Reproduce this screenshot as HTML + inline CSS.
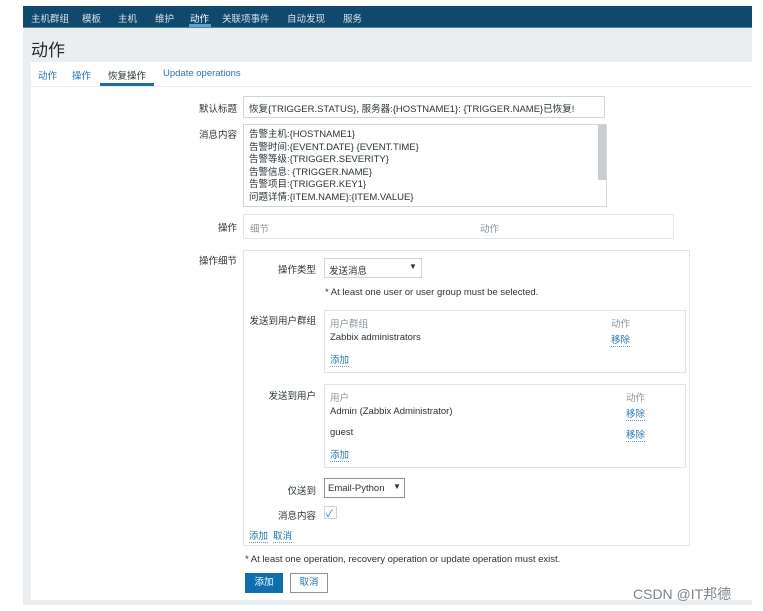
<!DOCTYPE html>
<html><head><meta charset="utf-8"><style>
*{margin:0;padding:0;box-sizing:border-box}
body{width:763px;height:611px;background:#fff;position:relative;overflow:hidden;font-family:"Liberation Sans","Noto Sans CJK SC",sans-serif;font-size:9.5px;color:#2a3338}
div,span{position:absolute;white-space:nowrap}
.nav{left:23px;top:6px;width:729px;height:22px;background:#0f4a6d;border-bottom:1px solid #4f87ad}
.nav span{color:#d6e2ea;top:5px;font-size:9.5px}
.gray{left:23px;top:28px;width:729px;height:577px;background:#ebeef0}
.white{left:31px;top:62px;width:721px;height:538px;background:#fff}
.lbl{text-align:right;width:100px}
.box{border:1px solid #e2e5e7;background:#fff}
.inp{border:1px solid #cfd4d7;background:#fff}
a,.lnk{color:#2775b0;border-bottom:1px dotted #6a9cc4}
.hd{color:#8a959c}
</style></head><body>
<div class="nav">
<span style="left:8px">主机群组</span><span style="left:59px">模板</span><span style="left:95px">主机</span><span style="left:132px">维护</span><span style="left:167px;color:#fff">动作</span><span style="left:199px">关联项事件</span><span style="left:264px">自动发现</span><span style="left:320px">服务</span>
<div style="left:166px;top:18px;width:22px;height:3px;background:#5fa0cf"></div>
</div>
<div class="gray"></div>
<div style="left:31px;top:36px;font-size:17px;color:#1f2a30">动作</div>
<div class="white"></div>
<div style="left:31px;top:86px;width:721px;height:1px;background:#e8ebed"></div>
<span style="left:38px;top:68px;color:#2775b0">动作</span>
<span style="left:72px;top:68px;color:#2775b0">操作</span>
<span style="left:108px;top:68px">恢复操作</span>
<div style="left:100px;top:83px;width:54px;height:3px;background:#1c6ea4"></div>
<span style="left:163px;top:68px;color:#2775b0">Update operations</span>

<span class="lbl" style="left:137px;top:101px">默认标题</span>
<div class="inp" style="left:243px;top:96px;width:362px;height:22px"></div>
<span style="left:249px;top:101px">恢复{TRIGGER.STATUS}, 服务器:{HOSTNAME1}: {TRIGGER.NAME}已恢复!</span>

<span class="lbl" style="left:137px;top:127px">消息内容</span>
<div class="inp" style="left:243px;top:124px;width:364px;height:83px"></div>
<div style="left:598px;top:125px;width:8px;height:55px;background:#c9cdd0"></div>
<div style="left:249px;top:129px;line-height:12.5px;white-space:pre">告警主机:{HOSTNAME1}
告警时间:{EVENT.DATE} {EVENT.TIME}
告警等级:{TRIGGER.SEVERITY}
告警信息: {TRIGGER.NAME}
告警项目:{TRIGGER.KEY1}
问题详情:{ITEM.NAME}:{ITEM.VALUE}</div>

<span class="lbl" style="left:137px;top:220px">操作</span>
<div class="box" style="left:243px;top:214px;width:431px;height:25px"></div>
<span class="hd" style="left:250px;top:221px">细节</span><span class="hd" style="left:480px;top:221px">动作</span>

<span class="lbl" style="left:137px;top:253px">操作细节</span>
<div class="box" style="left:243px;top:250px;width:447px;height:296px"></div>
<span class="lbl" style="left:216px;top:262px">操作类型</span>
<div class="inp" style="left:324px;top:258px;width:98px;height:20px"></div>
<span style="left:329px;top:263px">发送消息</span><span style="left:409px;top:262px;font-size:8px">▼</span>
<span style="left:325px;top:287px">* At least one user or user group must be selected.</span>

<span class="lbl" style="left:216px;top:313px">发送到用户群组</span>
<div class="box" style="left:324px;top:310px;width:362px;height:63px"></div>
<span class="hd" style="left:330px;top:316px">用户群组</span><span class="hd" style="left:611px;top:316px">动作</span>
<span style="left:330px;top:332px">Zabbix administrators</span><span class="lnk" style="left:611px;top:332px">移除</span>
<span class="lnk" style="left:330px;top:352px">添加</span>

<span class="lbl" style="left:216px;top:388px">发送到用户</span>
<div class="box" style="left:324px;top:384px;width:362px;height:84px"></div>
<span class="hd" style="left:330px;top:390px">用户</span><span class="hd" style="left:626px;top:390px">动作</span>
<span style="left:330px;top:406px">Admin (Zabbix Administrator)</span><span class="lnk" style="left:626px;top:406px">移除</span>
<span style="left:330px;top:427px">guest</span><span class="lnk" style="left:626px;top:427px">移除</span>
<span class="lnk" style="left:330px;top:447px">添加</span>

<span class="lbl" style="left:216px;top:483px">仅送到</span>
<div class="inp" style="left:324px;top:478px;width:81px;height:20px;border-color:#8a9296"></div>
<span style="left:328px;top:483px">Email-Python</span><span style="left:393px;top:482px;font-size:8px">▼</span>
<span class="lbl" style="left:216px;top:508px">消息内容</span>
<div class="inp" style="left:324px;top:506px;width:13px;height:13px"></div>
<span style="left:326px;top:505px;color:#2775b0;font-size:10px">✓</span>
<span class="lnk" style="left:249px;top:528px">添加</span><span class="lnk" style="left:273px;top:528px">取消</span>

<span style="left:245px;top:554px">* At least one operation, recovery operation or update operation must exist.</span>
<div style="left:245px;top:573px;width:38px;height:20px;background:#0f6eb0;color:#fff;text-align:center;line-height:20px">添加</div>
<div style="left:290px;top:573px;width:38px;height:20px;border:1px solid #8a9296;color:#2775b0;text-align:center;line-height:18px">取消</div>
<span style="left:633px;top:584px;font-size:14px;color:#7d8286">CSDN @IT邦德</span>
</body></html>
